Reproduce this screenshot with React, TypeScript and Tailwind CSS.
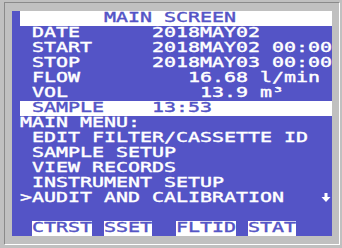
import React from "react";

function T({ s, blue }: { s: string; blue?: boolean }) {
  return (
    <span
      className={`inline-block align-top origin-left scale-x-[1.4235] whitespace-pre font-['DejaVu_Sans_Mono',monospace] text-[14px] leading-[13px] [-webkit-text-stroke:0.4px_currentColor] ${
        blue ? "text-[#5454c6]" : "text-white"
      }`}
    >
      {s}
    </span>
  );
}

function Row({ s, bar }: { s: string; bar?: boolean }) {
  return (
    <div className={`h-[15px] leading-[13px] flex items-start ${bar ? "bg-white" : ""}`}>
      <T s={s} blue={bar} />
    </div>
  );
}

function Btn({ s, className }: { s: string; className?: string }) {
  return (
    <div className={`h-[15px] bg-white leading-[13px] ${className ?? ""}`} style={{ width: s.length * 12 }}>
      <T s={s} blue />
    </div>
  );
}

export default function App() {
  return (
    <div className="w-[342px] h-[248px] bg-[#c0c0c0] pt-[2px] pl-[4px] overflow-hidden">
      <div className="w-[336px] h-[243px] border border-t-[#8a8a8a] border-l-[#8a8a8a] border-r-white border-b-white pt-[8px] pl-[7px]">
        <div className="w-[320px] h-[225px] bg-[#5454c6] pl-[8px] flex flex-col">
          <Row s="       MAIN SCREEN" bar />
          <Row s=" DATE      2018MAY02" />
          <Row s=" START     2018MAY02 00:00" />
          <Row s=" STOP      2018MAY03 00:00" />
          <Row s=" FLOW         16.68 l/min" />
          <Row s=" VOL           13.9 m³" />
          <Row s=" SAMPLE    13:53" bar />
          <Row s="MAIN MENU:" />
          <Row s=" EDIT FILTER/CASSETTE ID" />
          <Row s=" SAMPLE SETUP" />
          <Row s=" VIEW RECORDS" />
          <Row s=" INSTRUMENT SETUP" />
          <div className="h-[15px] flex items-start">
            <div className="w-[301px] h-[15px] leading-[13px]">
              <T s=">AUDIT AND CALIBRATION" />
            </div>
            <svg width="10" height="10" viewBox="0 0 10 10" className="mt-[1px]" fill="white">
              <rect x="3.5" y="1" width="3" height="5" />
              <polygon points="0.5,5 9.5,5 5,10" />
            </svg>
          </div>
          <div className="h-[15px]" />
          <div className="h-[15px] flex pl-[12px]">
            <Btn s="CTRST" />
            <Btn s="SSET" className="ml-[12px]" />
            <Btn s="FLTID" className="ml-[24px]" />
            <Btn s="STAT" className="ml-[12px]" />
          </div>
        </div>
      </div>
    </div>
  );
}
